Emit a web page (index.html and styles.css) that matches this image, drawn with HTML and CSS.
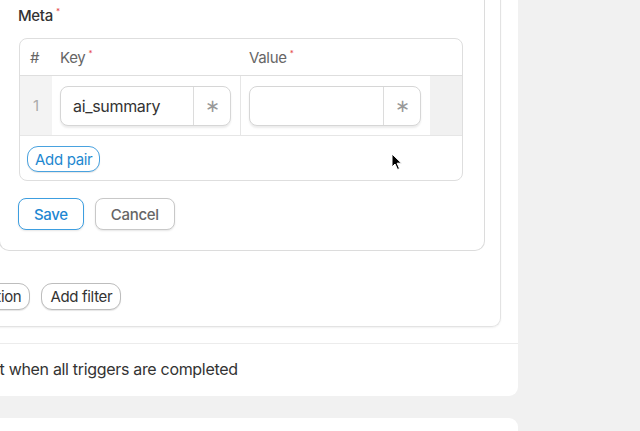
FILE: index.html
```html
<!DOCTYPE html>
<html>
<head>
  <meta charset="UTF-8">
  <title>Workflow step</title>
  <link rel="stylesheet" href="styles.css">
</head>
<body>
  <div class="panel">
    <div class="panel-main">
      <div class="rule-card">
        <div class="form-card">
          <div class="field-label">Meta<span class="req">*</span></div>

          <div class="meta-table">
            <div class="meta-row meta-head">
              <div class="cell cell-num">#</div>
              <div class="cell cell-key">Key<span class="req">*</span></div>
              <div class="cell cell-value">Value<span class="req">*</span></div>
              <div class="cell cell-action"></div>
            </div>
            <div class="meta-row meta-body">
              <div class="cell cell-num">1</div>
              <div class="cell cell-key">
                <div class="input">
                  <span class="input-text">ai_summary</span>
                  <span class="input-addon">&lowast;</span>
                </div>
              </div>
              <div class="cell cell-value">
                <div class="input">
                  <span class="input-text"></span>
                  <span class="input-addon">&lowast;</span>
                </div>
              </div>
              <div class="cell cell-action"></div>
            </div>
            <div class="meta-foot">
              <button class="pill pill-blue">Add pair</button>
            </div>
          </div>

          <div class="form-actions">
            <button class="btn btn-primary">Save</button>
            <button class="btn">Cancel</button>
          </div>
        </div>

        <div class="rule-actions">
          <button class="pill">Add condition</button>
          <button class="pill">Add filter</button>
        </div>
      </div>
    </div>

    <div class="panel-foot">Start when all triggers are completed</div>
  </div>

  <div class="panel panel-next"></div>

  <!-- mouse pointer -->
  <svg class="cursor" width="12" height="18" viewBox="0 0 12 18">
    <path d="M1 1 L1 14 L4 11 L6.5 16.5 L8.5 15.6 L6.1 10.2 L10.5 10.2 Z" fill="#000" stroke="#fff" stroke-width="1"/>
  </svg>
</body>
</html>
```

FILE: styles.css
```css
body {
  margin: 0;
  background-color: #f1f1f1;
  font-family: Inter, "Liberation Sans", sans-serif;
  letter-spacing: -0.02em;
  color: #333;
  overflow: hidden;
  height: 431px;
  position: relative;
}

button {
  font-family: inherit;
  letter-spacing: inherit;
  cursor: pointer;
}

.panel {
  background-color: #fff;
  width: 638px;
  margin-left: -120px;
  margin-top: -30px;
  border-radius: 0 0 9px 0;
}

.panel-main {
  padding: 0 17px 16px 17px;
}

.rule-card {
  border: 1px solid #e3e3e3;
  border-top: none;
  border-radius: 0 0 9px 9px;
  box-shadow: 0 1px 2px rgba(0, 0, 0, 0.06);
  padding: 0 15px 16px 16px;
}

.form-card {
  margin-left: 85px;
  border: 1px solid #dcdcdc;
  border-top: none;
  border-radius: 0 0 10px 10px;
  padding: 36px 18px 20px 18px;
}

.field-label {
  font-size: 15px;
  font-weight: 500;
  line-height: 20px;
  color: #333;
}

.req {
  color: #e5484d;
  font-size: 8px;
  vertical-align: top;
  margin-left: 3px;
  line-height: 10px;
}

.meta-table {
  margin-top: 12px;
  margin-left: 1px;
  width: 444px;
  border: 1px solid #dedede;
  border-radius: 8px;
  overflow: hidden;
  box-sizing: border-box;
}

.meta-row {
  display: flex;
  box-sizing: border-box;
}

.cell {
  box-sizing: border-box;
}

.cell-num {
  width: 32px;
  padding-left: 10px;
}

.cell-key {
  width: 189px;
  padding: 0 9px 0 8px;
  border-right: 1px solid #e6e6e6;
}

.cell-value {
  width: 189px;
  padding: 0 9px 0 8px;
}

.cell-action {
  flex: 1;
}

.meta-head {
  height: 37px;
  align-items: center;
  font-size: 15px;
  color: #666;
  border-bottom: 1px solid #dedede;
}

.meta-head .cell-key {
  border-right-color: transparent;
}

.meta-body {
  height: 60px;
  border-bottom: 1px solid #e6e6e6;
}

.meta-body .cell {
  padding-top: 10px;
}

.meta-body .cell-num {
  background-color: #f3f3f3;
  color: #aaa;
  font-size: 15px;
  padding-top: 20px;
  padding-left: 13px;
}

.meta-body .cell-action {
  background-color: #f1f1f1;
}

.input {
  display: flex;
  height: 40px;
  box-sizing: border-box;
  border: 1px solid #d6d6d6;
  border-radius: 8px;
  box-shadow: 0 2px 2px rgba(0, 0, 0, 0.08);
  background-color: #fff;
}

.input-text {
  flex: 1;
  padding-left: 12px;
  font-size: 16px;
  line-height: 38px;
  color: #333;
}

.input-addon {
  width: 36px;
  border-left: 1px solid #dcdcdc;
  text-align: center;
  line-height: 38px;
  font-size: 18px;
  font-weight: 300;
  color: #999;
}

.meta-foot {
  padding: 10px 7px 8px;
}

.pill {
  height: 27px;
  padding: 0 8px;
  border: 1px solid #bdbdbd;
  border-radius: 11px;
  background-color: #fff;
  font-size: 15px;
  color: #333;
  box-shadow: 0 1px 1px rgba(0, 0, 0, 0.1);
}

.pill-blue {
  height: 26px;
  padding: 0 7px;
  border-color: #49a2df;
  color: #1e88d0;
}

.form-actions {
  display: flex;
  gap: 11px;
  margin-top: 17px;
}

.btn {
  height: 32px;
  padding: 0 15px;
  border: 1px solid #c8c8c8;
  border-radius: 8px;
  background-color: #fff;
  font-size: 15px;
  font-weight: 500;
  color: #666;
  box-shadow: 0 1px 2px rgba(0, 0, 0, 0.1);
}

.btn-primary {
  border-color: #3d9ee0;
  color: #1f87d2;
}

.rule-actions {
  display: flex;
  gap: 11px;
  margin-top: 32px;
  margin-left: 4px;
}

.panel-foot {
  border-top: 1px solid #ececec;
  height: 52px;
  line-height: 50px;
  padding-left: 90px;
  font-size: 16px;
  color: #333;
  white-space: nowrap;
  overflow: hidden;
}

.panel-next {
  margin-top: 22px;
  height: 14px;
  border-radius: 0 9px 0 0;
}

.cursor {
  position: absolute;
  left: 391px;
  top: 153px;
}
```
